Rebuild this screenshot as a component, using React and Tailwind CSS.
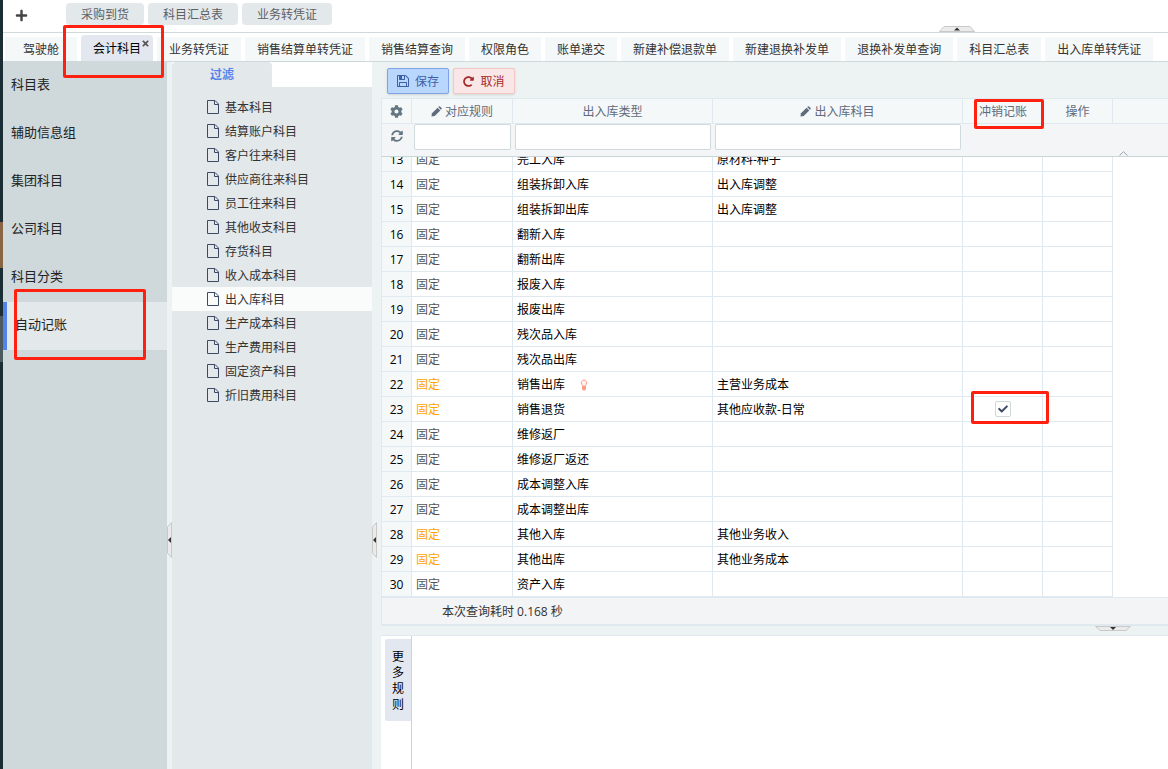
import React, { useState } from 'react';
import { FaPlus, FaTimes, FaCog, FaSyncAlt, FaRedoAlt, FaCheck } from 'react-icons/fa';

const topTabs = ['采购到货', '科目汇总表', '业务转凭证'];

const pageTabs = [
  '驾驶舱',
  '会计科目',
  '业务转凭证',
  '销售结算单转凭证',
  '销售结算查询',
  '权限角色',
  '账单递交',
  '新建补偿退款单',
  '新建退换补发单',
  '退换补发单查询',
  '科目汇总表',
  '出入库单转凭证',
];

const menus = ['科目表', '辅助信息组', '集团科目', '公司科目', '科目分类', '自动记账'];

const subjects = [
  '基本科目',
  '结算账户科目',
  '客户往来科目',
  '供应商往来科目',
  '员工往来科目',
  '其他收支科目',
  '存货科目',
  '收入成本科目',
  '出入库科目',
  '生产成本科目',
  '生产费用科目',
  '固定资产科目',
  '折旧费用科目',
];

const initialRows = [
  { id: 13, type: '完工入库', subject: '原材料-种子' },
  { id: 14, type: '组装拆卸入库', subject: '出入库调整' },
  { id: 15, type: '组装拆卸出库', subject: '出入库调整' },
  { id: 16, type: '翻新入库' },
  { id: 17, type: '翻新出库' },
  { id: 18, type: '报废入库' },
  { id: 19, type: '报废出库' },
  { id: 20, type: '残次品入库' },
  { id: 21, type: '残次品出库' },
  { id: 22, type: '销售出库', subject: '主营业务成本', custom: true, hint: true },
  { id: 23, type: '销售退货', subject: '其他应收款-日常', custom: true, reversal: true },
  { id: 24, type: '维修返厂' },
  { id: 25, type: '维修返厂返还' },
  { id: 26, type: '成本调整入库' },
  { id: 27, type: '成本调整出库' },
  { id: 28, type: '其他入库', subject: '其他业务收入', custom: true },
  { id: 29, type: '其他出库', subject: '其他业务成本', custom: true },
  { id: 30, type: '资产入库' },
];

function FileIcon() {
  return (
    <svg width="12" height="14" viewBox="0 0 12 14" fill="none" stroke="#3d4a66" className="shrink-0">
      <path d="M.5.5H8L11.5 4V13.5H.5Z" />
      <path d="M7.5.5V4.5H11.5" />
    </svg>
  );
}

function SaveIcon() {
  return (
    <svg width="12" height="12" viewBox="0 128 1536 1536" fill="currentColor">
      <path d="M384 1536h768v-384h-768v384zM1280 1536h128v-896q0-14-10-38.5t-20-34.5l-281-281q-10-10-34-20t-39-10v416q0 40-28 68t-68 28h-576q-40 0-68-28t-28-68v-416h-128v1280h128v-416q0-40 28-68t68-28h832q40 0 68 28t28 68v416zM896 608v-320q0-13-9.500-22.500t-22.500-9.500h-192q-13 0-22.500 9.500t-9.500 22.500v320q0 13 9.500 22.500t22.500 9.500h192q13 0 22.500-9.500t9.500-22.500zM1536 640v928q0 40-28 68t-68 28h-1344q-40 0-68-28t-28-68v-1344q0-40 28-68t68-28h928q40 0 88 20t76 48l280 280q28 28 48 76t20 88z" />
    </svg>
  );
}

function PencilIcon() {
  return (
    <svg width="11" height="11" viewBox="0 0 11 11" fill="currentColor">
      <path d="M.4 10.600 1 7.300 6.600 1.700 9.300 4.400 3.700 10Z" />
      <path d="M7.200 1.100 8 .4Q8.500 0 9 .4L10.600 2Q11 2.500 10.600 3L9.900 3.800Z" />
    </svg>
  );
}

function BulbIcon() {
  return (
    <svg width="8" height="12" viewBox="0 0 8 12" fill="#ff9c85">
      <path d="M4 1A2.800 2.800 0 0 0 1.900 5.600Q2.600 6.400 2.700 7.200H5.300Q5.400 6.400 6.100 5.600A2.800 2.800 0 0 0 4 1Z" fill="#fff2ee" stroke="#ff9c85" />
      <path d="M2 7H6V10L5 11.500H3L2 10Z" />
    </svg>
  );
}

// Collapse handle for the vertical splitters
function SideHandle() {
  return (
    <svg width="5" height="36" viewBox="0 0 5 36" className="absolute left-0 top-[460px]">
      <path d="M4.5.5 .5 5V31L4.5 35.5Z" fill="#ebebeb" stroke="#c9c9c9" />
      <path d="M4 15V21L1 18Z" fill="#333" />
    </svg>
  );
}

function Columns() {
  return (
    <colgroup>
      <col className="w-[30px]" />
      <col className="w-[101px]" />
      <col className="w-[200px]" />
      <col className="w-[250px]" />
      <col className="w-[80px]" />
      <col className="w-[70px]" />
    </colgroup>
  );
}

export default function App() {
  const [activeTab, setActiveTab] = useState('会计科目');
  const [activeMenu, setActiveMenu] = useState('自动记账');
  const [activeSubject, setActiveSubject] = useState('出入库科目');
  const [rows, setRows] = useState(initialRows);

  const toggleReversal = (id) => {
    setRows(rows.map((row) => (row.id === id ? { ...row, reversal: !row.reversal } : row)));
  };

  return (
    <div className="relative flex h-screen overflow-hidden bg-white font-['Open_Sans','Noto_Sans_CJK_SC',sans-serif] text-xs text-[#333]">
      {/* Edge strip */}
      <div className="flex w-[3px] shrink-0 flex-col bg-[#1b2d35]">
        <div className="h-[222px]" />
        <div className="h-[46px] bg-[#8a6544]" />
        <div className="h-12" />
        <div className="h-[46px] bg-[#4d5a5f]" />
      </div>

      <div className="flex min-w-0 flex-1 flex-col">
        {/* Top bar */}
        <div className="relative flex h-[33px] shrink-0 items-start gap-1 border-b border-[#cfd8db] pt-[3px]">
          <button aria-label="新增" className="flex h-6 w-[59px] items-center pl-3 text-[#444]">
            <FaPlus size={13} />
          </button>
          {topTabs.map((tab) => (
            <button key={tab} className="h-[22px] shrink-0 rounded-sm bg-[#e3e8ea] px-[15px] pt-0.5 text-[#5c6066]">
              {tab}
            </button>
          ))}
          <svg width="36" height="6" viewBox="0 0 36 6" className="absolute bottom-0 right-[193px]">
            <path d="M.5 5.5 5 .5H31L35.500 5.5Z" fill="#ebebeb" stroke="#c9c9c9" />
            <path d="M15 4.500H21L18 1.500Z" fill="#333" />
          </svg>
        </div>

        {/* Page tabs */}
        <div className="flex h-[29px] shrink-0 items-end gap-1 border-b border-[#cfd8db] pl-[2px]">
          {pageTabs.map((tab) =>
            tab === activeTab ? (
              <div key={tab} className="relative flex h-[26px] min-w-[72px] shrink-0 rounded-t-sm bg-[#e3e7f0]">
                <button className="w-full px-3 pt-px text-black">{tab}</button>
                <button aria-label="关闭" className="absolute right-[3px] top-1 text-[#555]">
                  <FaTimes size={9} />
                </button>
              </div>
            ) : (
              <button
                key={tab}
                onClick={() => setActiveTab(tab)}
                className="h-6 min-w-[72px] shrink-0 bg-[#f5f8f8] px-3 pt-0.5"
              >
                {tab}
              </button>
            )
          )}
        </div>

        <div className="flex min-h-0 flex-1 bg-[#edf2f3]">
          {/* Menu */}
          <nav className="flex w-[164px] shrink-0 flex-col bg-[#cfd8db]">
            {menus.map((menu) => (
              <button
                key={menu}
                onClick={() => setActiveMenu(menu)}
                className={`h-12 pb-0.5 pl-2 text-left text-[13px] text-[#222] ${
                  menu === activeMenu ? 'border-l-4 border-[#5483ea] bg-[#e3e8ea]' : ''
                }`}
              >
                {menu}
              </button>
            ))}
          </nav>
          <div className="relative w-[5px] shrink-0">
            <SideHandle />
          </div>

          {/* Subject list */}
          <div className="w-[200px] shrink-0 bg-[#e3e8ea]">
            <div className="flex h-[25px] bg-white">
              <button className="w-[100px] rounded-t bg-[#e3e8ea] pt-px font-bold text-[#5483ea]">过滤</button>
            </div>
            <ul className="pt-2">
              {subjects.map((item) => (
                <li key={item}>
                  <button
                    onClick={() => setActiveSubject(item)}
                    className={`flex h-6 w-full items-center gap-1.5 pl-[35px] ${
                      item === activeSubject ? 'bg-[#fafcfc]' : ''
                    }`}
                  >
                    <FileIcon />
                    <span className="pt-0.5">{item}</span>
                  </button>
                </li>
              ))}
            </ul>
          </div>
          <div className="relative w-[9px] shrink-0">
            <SideHandle />
          </div>

          {/* Main content */}
          <div className="flex min-w-0 flex-1 flex-col">
            <div className="flex h-9 shrink-0 gap-1 pl-1.5 pt-1.5">
              <button className="flex h-[26px] w-[62px] items-center justify-center gap-1.5 rounded-xs border border-[#7ea3e8] bg-[#b9d6fd] text-[#3d5fa8] shadow-sm">
                <SaveIcon />
                <span className="pt-0.5">保存</span>
              </button>
              <button className="flex h-[26px] w-[62px] items-center justify-center gap-1.5 rounded-xs border border-[#f5c6c6] bg-[#f9e7e7] text-[#a52a2a] shadow-sm">
                <FaRedoAlt size={11} />
                <span className="pt-0.5">取消</span>
              </button>
            </div>

            {/* Grid header */}
            <div className="relative shrink-0 border-b border-l border-t border-b-[#c8d6d8] border-l-[#e0e9f0] border-t-[#e0e9f0] bg-[#f3f5f7]">
              <div className="border-b border-[#e0e9f0] bg-[#f5f8f8]">
                <table className="w-[731px] table-fixed border-separate border-spacing-0 text-[#5f6b7c]">
                  <Columns />
                  <thead>
                    <tr className="h-6">
                      <th className="border-r border-[#e0e9f0] p-0">
                        <FaCog size={13} aria-label="设置" className="mx-auto text-[#647681]" />
                      </th>
                      <th className="border-r border-[#e0e9f0] p-0 font-normal">
                        <span className="flex items-center justify-center gap-[3px]">
                          <PencilIcon />
                          <span className="pt-0.5">对应规则</span>
                        </span>
                      </th>
                      <th className="border-r border-[#e0e9f0] p-0 pt-0.5 font-normal">出入库类型</th>
                      <th className="border-r border-[#e0e9f0] p-0 font-normal">
                        <span className="flex items-center justify-center gap-[3px]">
                          <PencilIcon />
                          <span className="pt-0.5">出入库科目</span>
                        </span>
                      </th>
                      <th className="p-0 pt-0.5 font-normal">冲销记账</th>
                      <th className="border-r border-[#e0e9f0] p-0 pt-0.5 font-normal">操作</th>
                    </tr>
                  </thead>
                </table>
              </div>
              <div className="grid h-8 grid-cols-[30px_101px_200px_250px] items-start">
                <button aria-label="刷新" className="flex h-6 items-center justify-center text-[#647681]">
                  <FaSyncAlt size={12} />
                </button>
                <input aria-label="对应规则" className="mx-[2px] h-[26px] rounded-xs border border-[#cfdadc] bg-white px-1" />
                <input aria-label="出入库类型" className="mx-[2px] h-[26px] rounded-xs border border-[#cfdadc] bg-white px-1" />
                <input aria-label="出入库科目" className="mx-[2px] h-[26px] rounded-xs border border-[#cfdadc] bg-white px-1" />
              </div>
              <svg width="9" height="5" viewBox="0 0 9 5" fill="none" stroke="#98a5aa" className="absolute bottom-0 right-10">
                <path d="M.5 4.500 4.500.8 8.500 4.500" />
              </svg>
            </div>

            {/* Grid rows, scrolled to the end */}
            <div className="flex min-h-0 flex-1 flex-col justify-end overflow-hidden border-l border-[#e0e9f0] bg-white">
              <table className="w-[731px] shrink-0 table-fixed border-separate border-spacing-0 text-black">
                <Columns />
                <tbody>
                  {rows.map((row) => (
                    <tr key={row.id} className="h-[25px]">
                      <td className="border-b border-r border-[#e0e9f0] bg-[#f5f8f8] p-0 pt-0.5 text-center">{row.id}</td>
                      <td
                        className={`border-b border-r border-[#e0e9f0] px-1 pb-0 pt-0.5 ${
                          row.custom ? 'text-[#ffa500]' : 'text-[#555]'
                        }`}
                      >
                        固定
                      </td>
                      <td className="border-b border-r border-[#e0e9f0] px-1 pb-0 pt-0.5">
                        <span className="flex items-center gap-[15px]">
                          {row.type}
                          {row.hint && <BulbIcon />}
                        </span>
                      </td>
                      <td className="border-b border-r border-[#e0e9f0] px-1 pb-0 pt-0.5">{row.subject}</td>
                      <td className="border-b border-r border-[#e0e9f0] p-0">
                        {row.reversal && (
                          <label className="relative mx-auto flex size-4 items-center justify-center">
                            <input
                              type="checkbox"
                              aria-label="冲销记账"
                              checked
                              onChange={() => toggleReversal(row.id)}
                              className="absolute inset-0 size-4 appearance-none rounded-xs border border-[#cfd8db] bg-white"
                            />
                            <FaCheck size={10} className="pointer-events-none relative text-[#3d4a66]" />
                          </label>
                        )}
                      </td>
                      <td className="border-b border-r border-[#e0e9f0] p-0" />
                    </tr>
                  ))}
                </tbody>
              </table>
            </div>

            {/* Status */}
            <div className="h-[29px] shrink-0 border-b-2 border-l border-t border-[#e0e9f0] bg-[#f2f4f6] pl-[60px] leading-7">
              本次查询耗时 0.168 秒
            </div>
            <div className="relative h-[9px] shrink-0">
              <svg width="36" height="6" viewBox="0 0 36 6" className="absolute right-[37px] top-0">
                <path d="M.5.5H35.500L31 4.500H5Z" fill="#ebebeb" stroke="#c9c9c9" />
                <path d="M15 1H21L18 4Z" fill="#333" />
              </svg>
            </div>

            {/* More rules */}
            <div className="flex h-[134px] shrink-0 border-t border-[#e0e9f0] bg-white">
              <div className="w-[31px] border-r border-[#c8d6d8] pl-1 pt-[3px]">
                <button className="h-[82px] w-full rounded-l-xs bg-[#e3e7f0] px-[7px] pt-0.5 leading-4 text-black">更多规则</button>
              </div>
            </div>
          </div>
        </div>
      </div>

      {/* Highlight marks */}
      <div className="pointer-events-none absolute left-[63px] top-[25px] h-[53px] w-[101px] rounded-xs border-3 border-[#ff2010]" />
      <div className="pointer-events-none absolute left-[14px] top-[289px] h-[71px] w-[132px] rounded-xs border-3 border-[#ff2010]" />
      <div className="pointer-events-none absolute left-[974px] top-[99px] h-[30px] w-[70px] rounded-xs border-3 border-[#ff2010]" />
      <div className="pointer-events-none absolute left-[971px] top-[391px] h-[33px] w-[78px] rounded-xs border-3 border-[#ff2010]" />
    </div>
  );
}
